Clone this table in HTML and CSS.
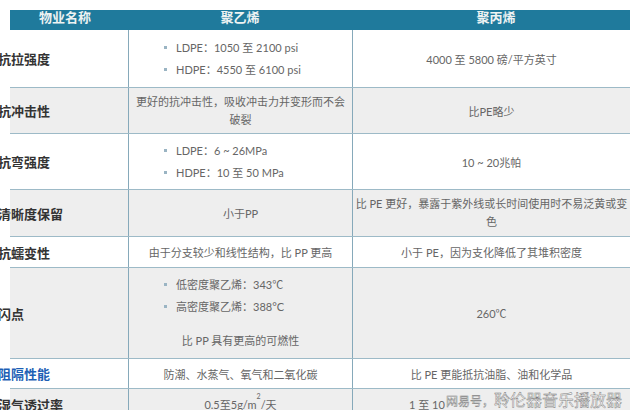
FILE: index.html
```html
<!DOCTYPE html>
<html lang="zh">
<head>
<meta charset="utf-8">
<link rel="stylesheet" href="styles.css">
</head>
<body>
<div class="page">
  <div class="grid">
    <div class="row head">
      <div class="cell">物业名称</div>
      <div class="cell">聚乙烯</div>
      <div class="cell">聚丙烯</div>
    </div>
    <div class="row r1">
      <div class="cell name"><span>抗拉强度</span></div>
      <div class="cell list">
        <ul class="bl"><li>LDPE：1050 至 2100 psi</li><li>HDPE：4550 至 6100 psi</li></ul>
      </div>
      <div class="cell">4000 至 5800 磅/平方英寸</div>
    </div>
    <div class="row r2 alt">
      <div class="cell name"><span>抗冲击性</span></div>
      <div class="cell"><p>更好的抗冲击性，吸收冲击力并变形而不会<br>破裂</p></div>
      <div class="cell">比PE略少</div>
    </div>
    <div class="row r3">
      <div class="cell name"><span>抗弯强度</span></div>
      <div class="cell list">
        <ul class="bl"><li>LDPE：6 ~ 26MPa</li><li>HDPE：10 至 50 MPa</li></ul>
      </div>
      <div class="cell">10 ~ 20兆帕</div>
    </div>
    <div class="row r4 alt">
      <div class="cell name"><span>清晰度保留</span></div>
      <div class="cell">小于PP</div>
      <div class="cell"><p>比 PE 更好，暴露于紫外线或长时间使用时不易泛黄或变<br>色</p></div>
    </div>
    <div class="row r5">
      <div class="cell name"><span>抗蠕变性</span></div>
      <div class="cell">由于分支较少和线性结构，比 PP 更高</div>
      <div class="cell">小于 PE，因为支化降低了其堆积密度</div>
    </div>
    <div class="row r6 alt">
      <div class="cell name"><span>闪点</span></div>
      <div class="cell stack">
        <ul class="bl"><li>低密度聚乙烯：343℃</li><li>高密度聚乙烯：388°C</li></ul>
        <p class="note">比 PP 具有更高的可燃性</p>
      </div>
      <div class="cell">260℃</div>
    </div>
    <div class="row r7">
      <div class="cell name link"><span>阻隔性能</span></div>
      <div class="cell">防潮、水蒸气、氧气和二氧化碳</div>
      <div class="cell">比 PE 更能抵抗油脂、油和化学品</div>
    </div>
    <div class="row r8 alt">
      <div class="cell name"><span>湿气透过率</span></div>
      <div class="cell">0.5至5g/m <sup>2</sup> /天</div>
      <div class="cell left">1 至 10</div>
    </div>
  </div>
  <div class="mark"><span class="small">网易号，</span>聆伦器音乐播放器</div>
</div>
</body>
</html>
```

FILE: styles.css
```css
html, body {
  margin: 0;
  padding: 0;
  background: #ffffff;
}
.page {
  position: relative;
  width: 640px;
  height: 410px;
  overflow: hidden;
  padding: 10px 0 0 10px;
  box-sizing: border-box;
  font-family: Lato, "Noto Sans CJK SC", sans-serif;
  font-size: 11px;
  color: #666666;
}
.grid {
  width: 620px;
}
.row {
  display: grid;
  grid-template-columns: 118px 224px 278px;
  box-sizing: border-box;
  border-bottom: 1px solid #9dbac7;
  background: #ffffff;
}
.row.alt {
  background: #eeeeee;
}
.cell {
  display: flex;
  align-items: center;
  justify-content: center;
  text-align: center;
  box-sizing: border-box;
  min-width: 0;
  white-space: nowrap;
}
.row:not(.head) .cell + .cell {
  border-left: 1px solid #86a9ba;
}
.head {
  height: 20px;
  background: #1f7a9c;
  border-bottom: 0;
}
.head .cell {
  align-items: flex-start;
  font-family: "Noto Sans CJK SC", sans-serif;
  font-weight: bold;
  font-size: 13px;
  line-height: 13px;
  color: #eef3f3;
  padding-top: 0;
}
.head .cell:first-child {
  padding-right: 8px;
}
.head .cell:last-child {
  padding-left: 10px;
}
.r1 { height: 58px; }
.r2 { height: 46px; }
.r3 { height: 56px; }
.r4 { height: 47px; }
.r5 { height: 31px; }
.r6 { height: 91px; }
.r7 { height: 30px; }
.r8 { height: 32px; }
.name {
  justify-content: flex-start;
  font-family: "Noto Sans CJK SC", sans-serif;
  font-weight: bold;
  font-size: 13px;
  color: #333333;
}
.name span {
  margin-left: -12px;
}
.name.link {
  color: #1d5fb5;
}
p {
  margin: 0;
  line-height: 18px;
}
.list {
  justify-content: flex-start;
}
.bl {
  list-style: none;
  margin: 0;
  padding: 0 0 0 35px;
  text-align: left;
}
.bl li {
  position: relative;
  line-height: 22px;
  padding-left: 12px;
}
.bl li::before {
  content: "";
  position: absolute;
  left: 0;
  top: 9px;
  width: 3px;
  height: 3px;
  background: #9ab4c3;
}
.stack {
  flex-direction: column;
  align-items: stretch;
  justify-content: flex-start;
  padding-top: 6px;
}
.stack .note {
  margin-top: 14px;
  text-align: center;
}
sup {
  font-size: 7px;
  vertical-align: 5px;
  line-height: 0;
}
.left {
  justify-content: flex-start;
  align-items: flex-start;
  padding-left: 56px;
  padding-top: 7px;
}
.r8 .cell:nth-child(2) {
  align-items: flex-start;
  padding-top: 7px;
}
.mark {
  position: absolute;
  left: 446px;
  top: 389px;
  font-family: "Noto Sans CJK SC", sans-serif;
  font-size: 16px;
  line-height: 20px;
  color: rgba(255, 255, 255, 0.9);
  -webkit-text-stroke: 0.45px #7a7a7a;
  white-space: nowrap;
}
.mark .small {
  font-size: 12px;
}
```
